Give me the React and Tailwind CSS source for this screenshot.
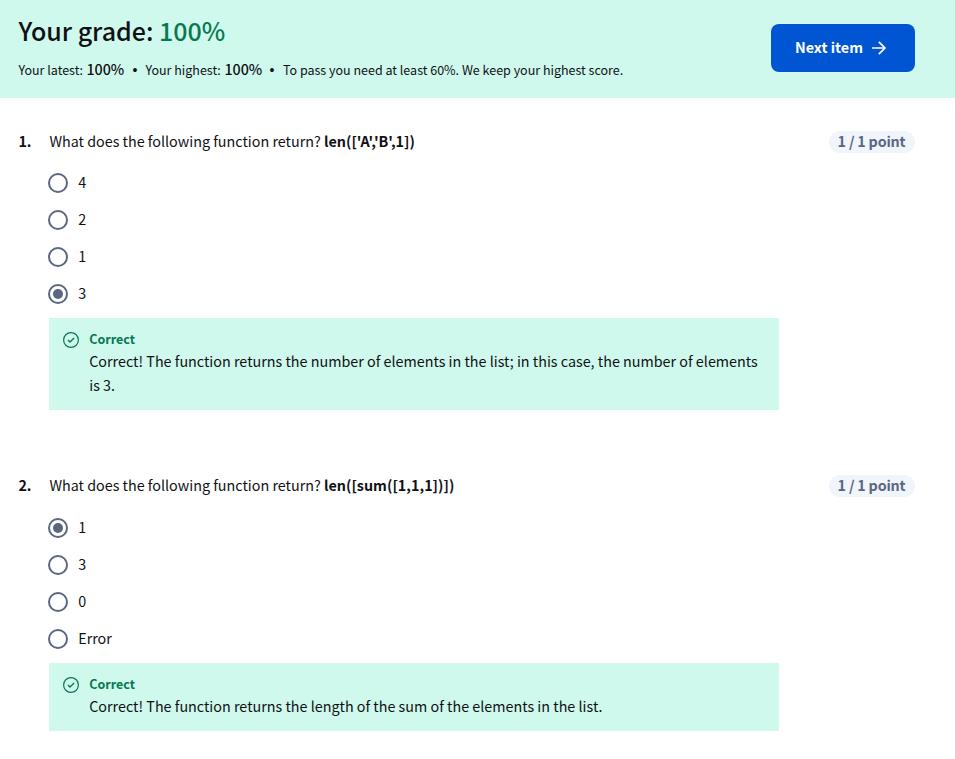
const questions = [
  {
    number: '1.',
    code: "len(['A','B',1])",
    options: ['4', '2', '1', '3'],
    selected: 3,
    feedback:
      'Correct! The function returns the number of elements in the list; in this case, the number of elements is 3.',
    className: 'pt-8',
    listClassName: 'mt-[19px]',
  },
  {
    number: '2.',
    code: 'len([sum([1,1,1])])',
    options: ['1', '3', '0', 'Error'],
    selected: 0,
    feedback: 'Correct! The function returns the length of the sum of the elements in the list.',
    className: 'pt-16',
    listClassName: 'mt-5',
  },
];

function ArrowIcon() {
  return (
    <svg className="size-4" viewBox="0 0 16 16" fill="none" stroke="currentColor" strokeWidth="1.7">
      <path d="M1 8h13M7.8 1.8 14 8l-6.2 6.2" />
    </svg>
  );
}

function CheckIcon() {
  return (
    <svg className="size-4 shrink-0 text-[#087850]" viewBox="0 0 16 16" fill="none" stroke="currentColor">
      <circle cx="8" cy="8" r="7.4" strokeWidth="1.2" />
      <path d="m5 7.9 2 2 4.1-3.9" strokeWidth="1.4" />
    </svg>
  );
}

function Radio({ checked }) {
  return (
    <span className="flex size-5 shrink-0 items-center justify-center rounded-full border-2 border-[#5b6780] bg-white">
      {checked && <span className="size-2.5 rounded-full bg-[#5b6780]" />}
    </span>
  );
}

function Bullet({ className }) {
  return <span className={`font-['Liberation_Sans',sans-serif] text-sm leading-5 ${className}`}>•</span>;
}

function Question({ q }) {
  return (
    <section className={q.className}>
      <div className="flex h-6 items-center pr-10 pl-[18.4px] leading-[22px]">
        <span className="w-[31px] shrink-0 pb-0.5 font-bold">{q.number}</span>
        <p className="flex-1 pb-0.5 whitespace-nowrap">
          What does the following function return? <b className="font-bold tracking-[0.02px]">{q.code}</b>
        </p>
        <span className="h-[22px] w-[86px] rounded-full bg-[#f0f4fb] pr-px text-center leading-5 font-bold tracking-[-0.2px] whitespace-nowrap text-[#5b6780]">
          1 / 1 point
        </span>
      </div>
      <div className={`flex flex-col gap-[17px] pl-12 ${q.listClassName}`}>
        {q.options.map((option, i) => (
          <label key={option} className="flex h-5 items-center gap-[10.2px] leading-5">
            <Radio checked={i === q.selected} />
            <span className="pb-0.5">{option}</span>
          </label>
        ))}
      </div>
      <div className="mt-3.5 ml-[49px] flex w-[730px] gap-[10.2px] bg-[#cff9ec] px-3.5 pt-[11px] pb-[13px]">
        <div className="pt-[3px]">
          <CheckIcon />
        </div>
        <div className="flex-1">
          <div className="text-[12.5px] leading-5 font-bold text-[#087850]">Correct</div>
          <p className="leading-6">{q.feedback}</p>
        </div>
      </div>
    </section>
  );
}

export default function App() {
  return (
    <main className="h-[759px] w-[955px] overflow-hidden bg-white font-['Noto_Sans_CJK_SC','Liberation_Sans',sans-serif] text-[14.33px] text-[#0f1114]">
      <header className="flex h-[98px] justify-between bg-[#cff9ec] pt-3.5 pr-10 pl-[18.4px]">
        <div className="whitespace-nowrap">
          <h1 className="text-[25px] leading-8 font-medium">
            Your grade: <span className="text-[#087850]">100%</span>
          </h1>
          <p className="mt-3.5 flex h-5 items-center text-[12.51px] leading-5">
            <span className="w-[68px]">Your latest:</span>
            <span className="w-[46px] pb-0.5 text-[14.3px] font-medium">100%</span>
            <Bullet className="w-[13px]" />
            <span className="w-[79px]">Your highest:</span>
            <span className="w-[45px] pb-0.5 text-[14.3px] font-medium">100%</span>
            <Bullet className="w-[13.6px]" />
            <span>To pass you need at least 60%. We keep your highest score.</span>
          </p>
        </div>
        <button className="mt-2.5 flex h-12 w-36 items-center gap-2 rounded-lg bg-[#0056d2] pl-6 font-bold text-white">
          <span className="pb-0.5">Next item</span>
          <ArrowIcon />
        </button>
      </header>
      {questions.map((q) => (
        <Question key={q.number} q={q} />
      ))}
    </main>
  );
}
